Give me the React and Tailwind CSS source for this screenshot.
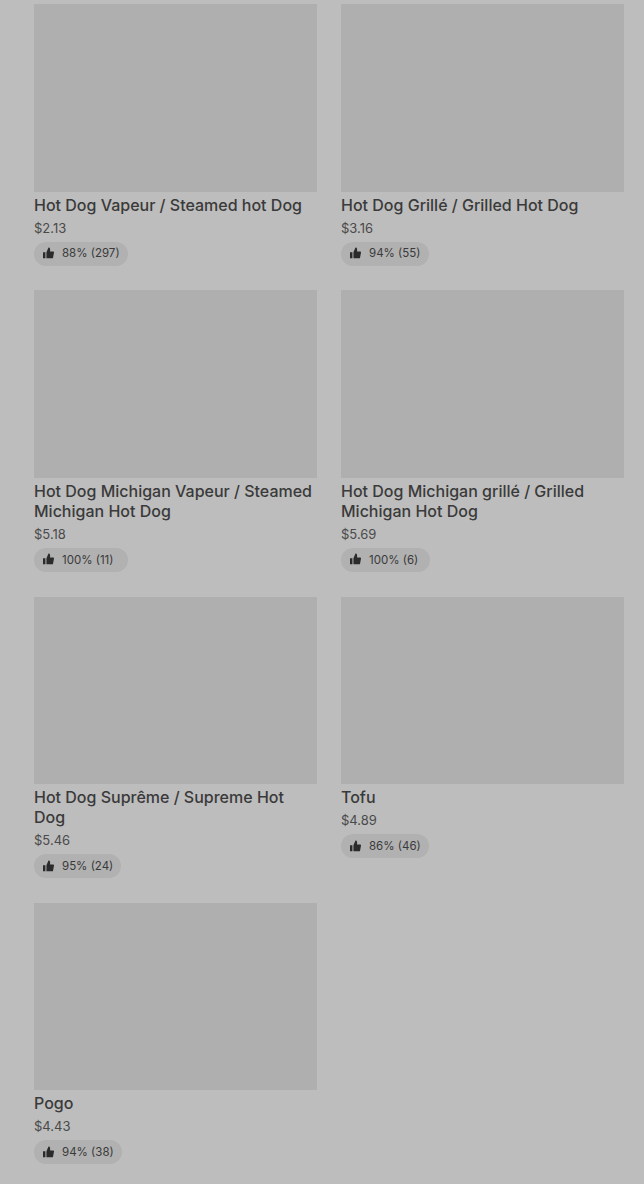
const items = [
  { name: 'Hot Dog Vapeur / Steamed hot Dog', price: '$2.13', rating: '88% (297)', w: 'w-[94px]' },
  { name: 'Hot Dog Grillé / Grilled Hot Dog', price: '$3.16', rating: '94% (55)', w: 'w-[88px]' },
  { name: 'Hot Dog Michigan Vapeur / Steamed Michigan Hot Dog', price: '$5.18', rating: '100% (11)', w: 'w-[94px]' },
  { name: 'Hot Dog Michigan grillé / Grilled Michigan Hot Dog', price: '$5.69', rating: '100% (6)', w: 'w-[89px]' },
  { name: 'Hot Dog Suprême / Supreme Hot Dog', price: '$5.46', rating: '95% (24)', w: 'w-[87px]' },
  { name: 'Tofu', price: '$4.89', rating: '86% (46)', w: 'w-[88px]' },
  { name: 'Pogo', price: '$4.43', rating: '94% (38)', w: 'w-[88px]' },
];

function ThumbIcon() {
  return (
    <svg viewBox="0 0 16 16" className="mb-px h-3 w-[11px] shrink-0 fill-[#2b2b2b]" preserveAspectRatio="none">
      <path d="M0 7h3.5v8H0V7zm5 0l3-6.5c1.4 0 2.3.9 2.3 2.2V6H15c.7 0 1.1.6 1 1.2l-1.4 7c-.1.5-.5.8-1 .8H5V7z" />
    </svg>
  );
}

function ItemCard({ item }) {
  return (
    <div className="flex flex-col">
      <div className="h-[187.6px] bg-[#afafaf]" />
      <h3 className="mt-[3px] text-[16px] font-medium leading-[20px] text-[#3a3a3a]">{item.name}</h3>
      <div className="mt-[3px] text-[13px] leading-[20px] text-[#4a4a4a]">{item.price}</div>
      <div className={`mt-[4px] flex h-6 items-center gap-[8px] rounded-full bg-[#b1b1b1] pl-[9px] text-[11.5px] text-[#3a3a3a] ${item.w}`}>
        <ThumbIcon />
        <span className="pt-px">{item.rating}</span>
      </div>
    </div>
  );
}

export default function App() {
  return (
    <div className="min-h-[1184px] bg-[#bdbdbd] pl-[34px] pr-[20px] pt-[3.95px] font-['Inter',sans-serif]">
      <div className="grid grid-cols-2 gap-x-[24px] gap-y-[24.7px]">
        {items.map((item) => (
          <ItemCard key={item.name} item={item} />
        ))}
      </div>
    </div>
  );
}
